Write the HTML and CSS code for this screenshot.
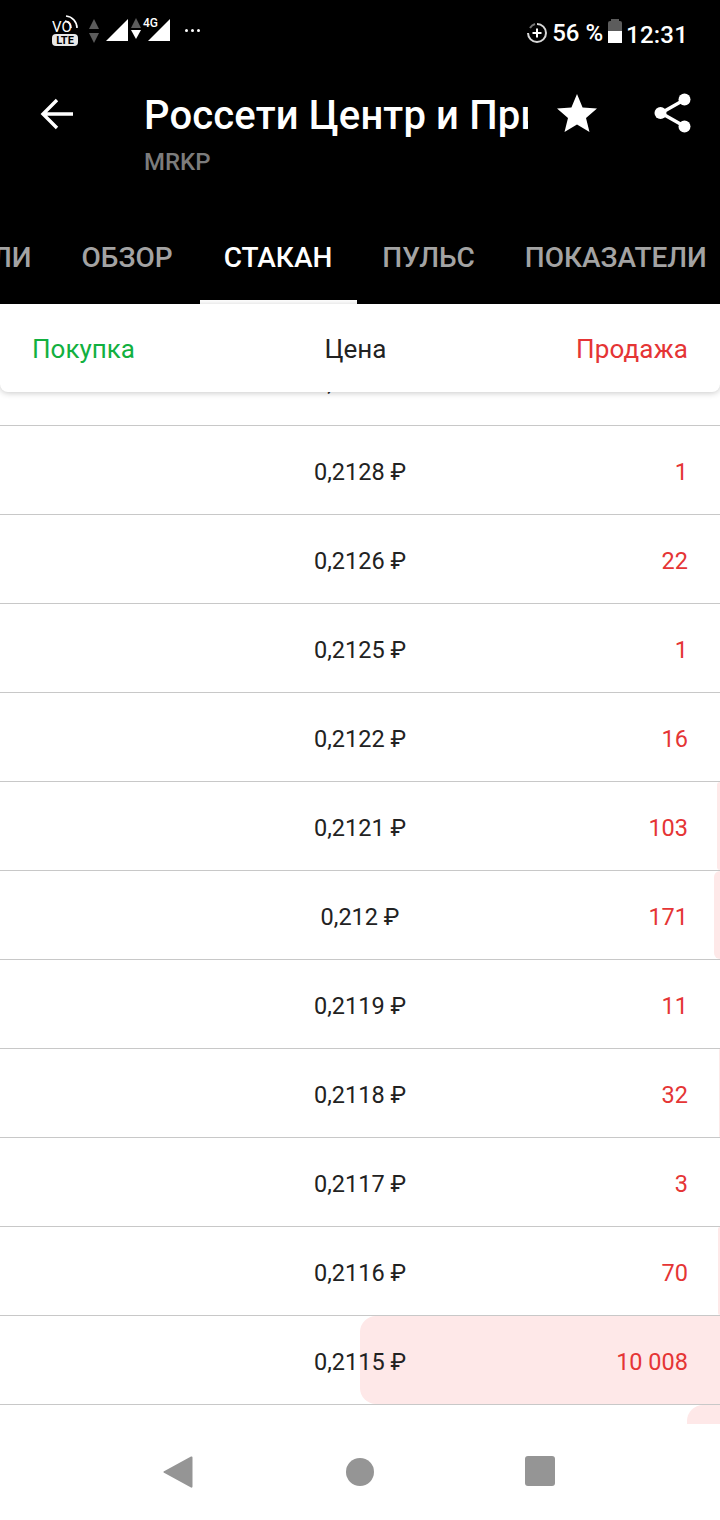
FILE: index.html
```html
<!DOCTYPE html>
<html lang="ru">
<head>
    <meta charset="UTF-8">
    <meta name="viewport" content="width=device-width, initial-scale=1.0">
    <title>Стакан</title>
    <link rel="stylesheet" href="styles.css">
</head>
<body>
    <div class="app">
        <div class="top">
            <div class="status">
                <div class="status-left">
                    <svg class="ic-volte" width="28" height="34" viewBox="0 0 28 34">
                        <text x="0" y="19" class="volte-text">VO</text>
                        <path d="M13 8a7 7 0 0 1 6 7M14 3a12 12 0 0 1 11 12" fill="none" stroke="#fff" stroke-width="1.6"/>
                        <rect x="0" y="21" width="26" height="12" rx="4" fill="#e8e8e8"/>
                        <text x="13" y="31" text-anchor="middle" class="lte-text">LTE</text>
                    </svg>
                    <svg class="ic-arrows" width="12" height="24" viewBox="0 0 12 24">
                        <path d="M6 0l5 10H1z" fill="#5c5c5c"/>
                        <path d="M6 24l5-10H1z" fill="#5c5c5c"/>
                    </svg>
                    <svg class="ic-signal" width="22" height="22" viewBox="0 0 23 23"><path d="M23 0v23H0z" fill="#fff"/></svg>
                    <svg class="ic-arrows2" width="12" height="24" viewBox="0 0 12 24">
                        <path d="M6 0l5 10H1z" fill="#5c5c5c"/>
                        <path d="M6 21l5-9H1z" fill="#fff"/>
                    </svg>
                    <div class="signal-4g">
                        <span class="label-4g">4G</span>
                        <svg width="22" height="22" viewBox="0 0 23 23"><path d="M23 0v23H0z" fill="#fff"/></svg>
                    </div>
                    <div class="dots"><i></i><i></i><i></i></div>
                </div>
                <div class="status-right">
                    <svg width="20" height="22" viewBox="0 0 20 22">
                        <path d="M10 2a9 9 0 1 1-9 9" fill="none" stroke="#d8d8d8" stroke-width="2"/>
                        <path d="M3 6a9 9 0 0 1 5-4" fill="none" stroke="#777" stroke-width="2"/>
                        <path d="M10 6.500v9M5.500 11h9" stroke="#fff" stroke-width="2"/>
                    </svg>
                    <span class="battery-text">56 %</span>
                    <div class="battery"><div class="battery-cap"></div><div class="battery-empty"></div><div class="battery-full"></div></div>
                    <span class="clock">12:31</span>
                </div>
            </div>
            <div class="toolbar">
                <svg class="back" width="33" height="32" viewBox="0 0 33 32">
                    <path d="M33 16H3M17 2L3 16l14 14" fill="none" stroke="#fff" stroke-width="3.400"/>
                </svg>
                <div class="titles">
                    <div class="title">Россети Центр и Приволжье</div>
                    <div class="ticker">MRKP</div>
                </div>
                <svg class="star" width="40" height="38" viewBox="0 0 40 38">
                    <path d="M20 0l5.600 13.600 14.400 1-11 9.400 3.500 14L20 30.400 7.500 38 11 24 0 14.600l14.400-1z" fill="#fff"/>
                </svg>
                <svg class="share" width="37" height="40" viewBox="0 0 37 40">
                    <path d="M30 7L7 20l23 13" fill="none" stroke="#fff" stroke-width="3.400"/>
                    <circle cx="30.500" cy="6.500" r="6" fill="#fff"/>
                    <circle cx="6.500" cy="20" r="6" fill="#fff"/>
                    <circle cx="30.500" cy="33.500" r="6" fill="#fff"/>
                </svg>
            </div>
            <div class="tabs">
                <div class="tab first">ЛИ</div>
                <div class="tab">ОБЗОР</div>
                <div class="tab active">СТАКАН</div>
                <div class="tab">ПУЛЬС</div>
                <div class="tab">ПОКАЗАТЕЛИ</div>
            </div>
        </div>

        <div class="head">
            <span class="buy">Покупка</span>
            <span class="price-head">Цена</span>
            <span class="sell">Продажа</span>
        </div>

        <div class="book">
            <div class="row"><span class="price">0,2129 ₽</span></div>
            <div class="row"><span class="price">0,2128 ₽</span><span class="qty">1</span></div>
            <div class="row"><span class="price">0,2126 ₽</span><span class="qty">22</span></div>
            <div class="row"><span class="price">0,2125 ₽</span><span class="qty">1</span></div>
            <div class="row"><span class="price">0,2122 ₽</span><span class="qty">16</span></div>
            <div class="row"><div class="depth" style="width: 3px"></div><span class="price">0,2121 ₽</span><span class="qty">103</span></div>
            <div class="row"><div class="depth" style="width: 6px"></div><span class="price">0,212 ₽</span><span class="qty">171</span></div>
            <div class="row"><span class="price">0,2119 ₽</span><span class="qty">11</span></div>
            <div class="row"><div class="depth" style="width: 1px"></div><span class="price">0,2118 ₽</span><span class="qty">32</span></div>
            <div class="row"><span class="price">0,2117 ₽</span><span class="qty">3</span></div>
            <div class="row"><div class="depth" style="width: 2px"></div><span class="price">0,2116 ₽</span><span class="qty">70</span></div>
            <div class="row"><div class="depth" style="width: 360px"></div><span class="price">0,2115 ₽</span><span class="qty">10 008</span></div>
            <div class="row"><div class="depth" style="width: 33px"></div></div>
        </div>

        <div class="nav">
            <svg width="30" height="34" viewBox="0 0 30 34"><path d="M28 1.500L1.500 16a1 1 0 0 0 0 2L28 32.500q1.500.5 1.500-1V2.500q0-1.500-1.500-1z" fill="#959595"/></svg>
            <div class="nav-circle"></div>
            <div class="nav-square"></div>
        </div>
    </div>
</body>
</html>
```

FILE: styles.css
```css
body {
    margin: 0;
    font-family: 'Roboto', sans-serif;
    background-color: #ffffff;
}

.app {
    width: 720px;
    height: 1520px;
    display: flex;
    flex-direction: column;
    overflow: hidden;
}

.top {
    height: 304px;
    flex: none;
    background-color: #000000;
    color: #ffffff;
    display: flex;
    flex-direction: column;
}

.status {
    height: 66px;
    flex: none;
    display: flex;
    justify-content: space-between;
    align-items: center;
    padding: 0 32px 0 52px;
}

.status-left {
    display: flex;
    align-items: center;
    margin-top: -6px;
}

.volte-text {
    font-size: 15px;
    fill: #ffffff;
}

.lte-text {
    font-size: 11px;
    font-weight: 700;
    fill: #000000;
}

.ic-arrows {
    margin: 2px 0 0 8px;
}

.ic-signal {
    margin-left: 6px;
}

.ic-arrows2 {
    margin-left: 2px;
}

.signal-4g {
    position: relative;
    margin-left: 6px;
    display: flex;
}

.label-4g {
    position: absolute;
    left: -5px;
    top: -3px;
    font-size: 12px;
    font-weight: 500;
}

.dots {
    display: flex;
    gap: 3px;
    margin-left: 15px;
}

.dots i {
    width: 3px;
    height: 3px;
    border-radius: 50%;
    background-color: #ffffff;
}

.status-right {
    display: flex;
    align-items: center;
}

.battery-text {
    font-size: 24px;
    font-weight: 500;
    margin-left: 5px;
}

.battery {
    width: 14px;
    margin: -4px 0 0 5px;
    display: flex;
    flex-direction: column;
    align-items: center;
}

.battery-cap {
    width: 8px;
    height: 2px;
    background-color: #5c5c5c;
}

.battery-empty {
    width: 14px;
    height: 10px;
    background-color: #5c5c5c;
    border-radius: 2px 2px 0 0;
}

.battery-full {
    width: 14px;
    height: 12px;
    background-color: #ffffff;
}

.clock {
    font-size: 24px;
    font-weight: 500;
    margin: 3px 0 0 4px;
    letter-spacing: 0.2px;
}

.toolbar {
    height: 144px;
    flex: none;
    display: flex;
    align-items: flex-start;
}

.back {
    margin: 32px 0 0 40px;
    flex: none;
}

.titles {
    width: 384px;
    margin: 25px 0 0 71px;
    flex: none;
    overflow: hidden;
}

.title {
    font-size: 40px;
    font-weight: 500;
    line-height: 50px;
    letter-spacing: 0.15px;
    white-space: nowrap;
}

.ticker {
    font-size: 24px;
    font-weight: 500;
    line-height: 42px;
    color: #7c7c7c;
}

.star {
    margin: 28px 0 0 29px;
    flex: none;
}

.share {
    margin: 27px 0 0 57px;
    flex: none;
}

.tabs {
    height: 94px;
    flex: none;
    display: flex;
    font-size: 28px;
    font-weight: 500;
    color: #a3a3a3;
}

.tab {
    padding: 0 25px;
    line-height: 96px;
    height: 94px;
    box-sizing: border-box;
    white-space: nowrap;
    flex: none;
}

.tab.first {
    margin-left: -8px;
    padding: 0 25px 0 0;
}

.tab.active {
    margin-left: 2px;
    padding: 0 25px 0 24px;
    color: #ffffff;
    border-bottom: 4px solid #ffffff;
}

.head {
    height: 88px;
    flex: none;
    position: relative;
    z-index: 2;
    background-color: #ffffff;
    border-radius: 0 0 8px 8px;
    box-shadow: 0 1px 6px rgba(0, 0, 0, 0.22);
    display: flex;
    justify-content: space-between;
    align-items: center;
    padding: 2px 32px 0;
    box-sizing: border-box;
    font-size: 26px;
}

.buy {
    color: #12b03f;
}

.price-head {
    color: #222222;
}

.sell {
    color: #e53535;
    letter-spacing: 0.15px;
}

.book {
    flex: 1;
    margin-top: -55px;
    overflow: hidden;
}

.row {
    height: 89px;
    box-sizing: border-box;
    padding-top: 4px;
    border-bottom: 1px solid #c8c8c8;
    position: relative;
    display: flex;
    align-items: center;
    justify-content: center;
    font-size: 23.5px;
}

.depth {
    position: absolute;
    top: 0;
    bottom: 0;
    right: 0;
    background-color: #fee8e8;
    border-radius: 16px 0 0 16px;
}

.price {
    position: relative;
    color: #222222;
}

.qty {
    position: absolute;
    right: 32px;
    color: #e53535;
}

.nav {
    height: 96px;
    flex: none;
    background-color: #ffffff;
    display: flex;
    justify-content: center;
    align-items: center;
    position: relative;
}

.nav svg {
    position: absolute;
    left: 163px;
    top: 31px;
}

.nav-circle {
    width: 28px;
    height: 28px;
    border-radius: 50%;
    background-color: #959595;
}

.nav-square {
    position: absolute;
    left: 525px;
    top: 32px;
    width: 30px;
    height: 30px;
    border-radius: 3px;
    background-color: #959595;
}
```
